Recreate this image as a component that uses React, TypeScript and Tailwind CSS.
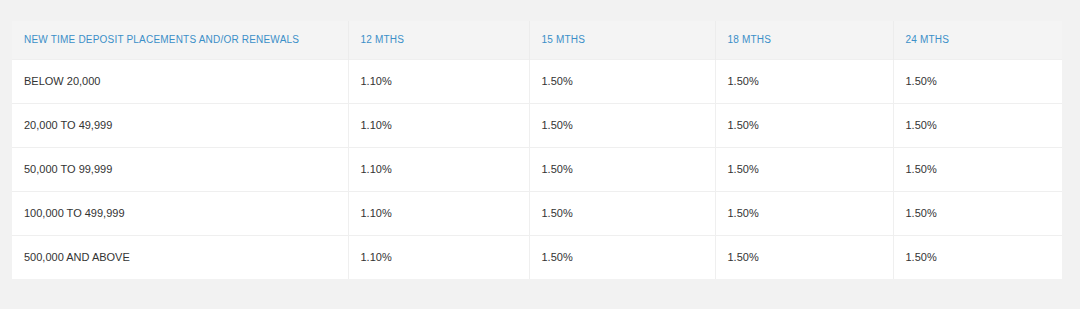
import React from "react";

const rows = [
  { label: "BELOW 20,000", rates: ["1.10%", "1.50%", "1.50%", "1.50%"] },
  { label: "20,000 TO 49,999", rates: ["1.10%", "1.50%", "1.50%", "1.50%"] },
  { label: "50,000 TO 99,999", rates: ["1.10%", "1.50%", "1.50%", "1.50%"] },
  { label: "100,000 TO 499,999", rates: ["1.10%", "1.50%", "1.50%", "1.50%"] },
  { label: "500,000 AND ABOVE", rates: ["1.10%", "1.50%", "1.50%", "1.50%"] },
];

const headers = ["NEW TIME DEPOSIT PLACEMENTS AND/OR RENEWALS", "12 MTHS", "15 MTHS", "18 MTHS", "24 MTHS"];
const widths = ["w-[336px]", "w-[181px]", "w-[186px]", "w-[178px]", "w-[169px]"];

export default function App() {
  return (
    <div className="w-[1080px] h-[309px] bg-[#f2f2f2] pt-[21px] pl-[12px] font-['Liberation_Sans',Arial,sans-serif]">
      <table className="w-[1050px] table-fixed border-collapse">
        <colgroup>
          {widths.map((w, i) => (
            <col key={i} className={w} />
          ))}
        </colgroup>
        <thead>
          <tr className="h-[38px] bg-[#f4f4f4]">
            {headers.map((h, i) => (
              <th
                key={i}
                className={`text-left font-normal text-[10px] tracking-[0.2px] text-[#3b8fc8] px-3 ${
                  i > 0 ? "border-l border-[#ececec]" : ""
                }`}
              >
                {h}
              </th>
            ))}
          </tr>
        </thead>
        <tbody>
          {rows.map((r, idx) => (
            <tr key={idx} className="h-[44px] bg-white border-t border-[#efefef]">
              <td className="px-3 text-[11px] text-[#333]">{r.label}</td>
              {r.rates.map((v, i) => (
                <td key={i} className="px-3 text-[11px] text-[#333] border-l border-[#efefef]">
                  {v}
                </td>
              ))}
            </tr>
          ))}
        </tbody>
      </table>
    </div>
  );
}
